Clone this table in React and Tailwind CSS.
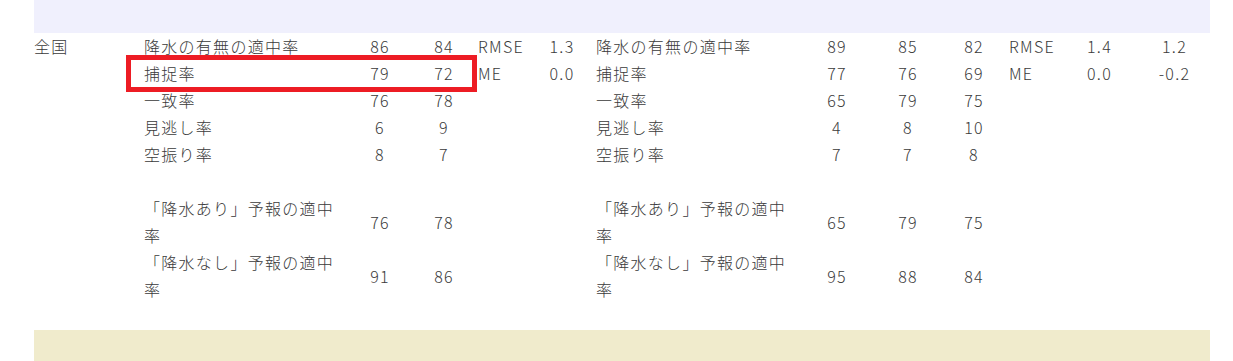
import React from "react";

// rows for the left (2 columns) and right (3 columns) tables
const rows = [
  { label: "降水の有無の適中率", a: ["86", "84"], b: ["89", "85", "82"], extra: ["RMSE", "1.3", "RMSE", "1.4", "1.2"] },
  { label: "捕捉率", a: ["79", "72"], b: ["77", "76", "69"], extra: ["ME", "0.0", "ME", "0.0", "-0.2"] },
  { label: "一致率", a: ["76", "78"], b: ["65", "79", "75"] },
  { label: "見逃し率", a: ["6", "9"], b: ["4", "8", "10"] },
  { label: "空振り率", a: ["8", "7"], b: ["7", "7", "8"] },
  null,
  { label: "「降水あり」予報の適中率", a: ["76", "78"], b: ["65", "79", "75"] },
  { label: "「降水なし」予報の適中率", a: ["91", "86"], b: ["95", "88", "84"] },
  null,
];

function Row({ row, first }) {
  const ex = row.extra || ["", "", "", "", ""];
  return (
    <>
      <div>{first ? "全国" : ""}</div>
      <div>{row.label}</div>
      <div className="text-center">{row.a[0]}</div>
      <div className="text-center">{row.a[1]}</div>
      <div className="pl-[6px]">{ex[0]}</div>
      <div className="text-center">{ex[1]}</div>
      <div className="pl-[8px]">{row.label}</div>
      <div className="text-center">{row.b[0]}</div>
      <div className="text-center">{row.b[1]}</div>
      <div className="text-center">{row.b[2]}</div>
      <div className="pl-px">{ex[2]}</div>
      <div className="text-center">{ex[3]}</div>
      <div className="text-center">{ex[4]}</div>
    </>
  );
}

function App() {
  return (
    <div
      className="min-h-[361px] bg-white text-[#3a3a3a] text-[16px] font-light leading-[27px] tracking-[0.08em]"
      style={{ fontFamily: '"Noto Sans CJK JP", "Noto Sans", sans-serif' }}
    >
      <div className="relative ml-[34px] w-[1176px]">
        <div className="h-[33px] bg-[#f0f0fd]"></div>

        <div className="grid grid-cols-[110px_200px_72px_56px_64px_52px_210px_78px_64px_68px_52px_79px_71px] items-center">
          {rows.map((row, i) =>
            row ? (
              <Row key={i} row={row} first={i === 0} />
            ) : (
              <div key={i} className="col-span-13 h-[27px]"></div>
            )
          )}
        </div>

        <div className="h-[40px] bg-[#f0ebcc]"></div>

        {/* highlight box */}
        <div className="absolute left-[92px] top-[55px] w-[351px] h-[37px] border-[5px] border-[#ed1c24]"></div>
      </div>
    </div>
  );
}

export default App;
